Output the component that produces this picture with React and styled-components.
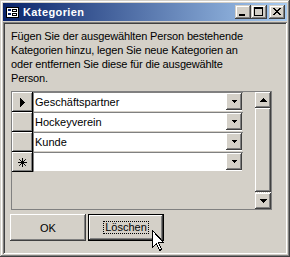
import React from 'react';
import styled, { createGlobalStyle, css } from 'styled-components';

const face = '#d4d0c8';
const uiFont = '"Liberation Sans", Arial, sans-serif';

const GlobalStyle = createGlobalStyle`
  html, body {
    margin: 0;
    padding: 0;
    background: #fff;
  }
  body {
    font-family: ${uiFont};
  }
`;

// classic 3D raised edge
const raised = css`
  background: ${face};
  box-shadow: inset -1px -1px #404040, inset 1px 1px #fff,
    inset -2px -2px #808080, inset 2px 2px ${face};
`;

const Window = styled.div`
  position: relative;
  box-sizing: border-box;
  width: 290px;
  height: 257px;
  padding: 3px;
  display: flex;
  flex-direction: column;
  background: ${face};
  box-shadow: inset -1px -1px #404040, inset 1px 1px ${face},
    inset -2px -2px #808080, inset 2px 2px #fff;
  overflow: hidden;
`;

const TitleBar = styled.div`
  flex: none;
  height: 18px;
  display: flex;
  align-items: center;
  padding: 0 2px;
  background: linear-gradient(to right, #0a246a, #a6caf0);
`;

const TitleText = styled.span`
  margin-left: 2px;
  color: #fff;
  font: bold 11px ${uiFont};
  letter-spacing: 0.4px;
  white-space: nowrap;
`;

const CaptionButtons = styled.div`
  margin-left: auto;
  display: flex;
`;

const CaptionButton = styled.div`
  width: 16px;
  height: 14px;
  margin-left: ${p => (p.$gap ? '2px' : '0')};
  background: ${face};
  box-shadow: inset -1px -1px #404040, inset 1px 1px ${face},
    inset -2px -2px #808080, inset 2px 2px #fff;

  svg {
    display: block;
  }
`;

const Client = styled.div`
  flex: 1;
  margin-top: 1px;
  padding: 7px 8px 0;
  box-shadow: inset 1px 1px #808080, inset -1px -1px #fff,
    inset 2px 2px #404040, inset -2px -2px ${face};
`;

const Description = styled.p`
  margin: 0;
  font: 11px/14px ${uiFont};
  letter-spacing: -0.15px;
  color: #000;
  white-space: nowrap;
`;

const Subform = styled.div`
  box-sizing: border-box;
  width: 261px;
  height: 119px;
  margin-top: 6px;
  border: 1px solid #808080;
  display: flex;
  justify-content: space-between;
`;

const Grid = styled.div`
  width: 231px;
  display: flex;
  flex-direction: column;
`;

const Row = styled.div`
  display: flex;
  height: 20px;
`;

const Selector = styled.div`
  width: 21px;
  height: 20px;
  display: flex;
  align-items: center;
  justify-content: center;
  background: ${face};
  box-shadow: inset -1px -1px #000, inset 1px 1px #fff, inset -2px -2px #808080;
`;

const Combo = styled.div`
  box-sizing: border-box;
  width: 210px;
  height: 20px;
  display: flex;
  padding-left: 2px;
  background: #fff;
  box-shadow: inset 1px 1px #808080, inset -1px -1px ${face};
`;

const ComboText = styled.span`
  flex: 1;
  align-self: center;
  font: 11px ${uiFont};
  color: #000;
  white-space: nowrap;
`;

const DropButton = styled.div`
  width: 16px;
  height: 17px;
  margin: 1px 1px 0 0;
  display: flex;
  align-items: center;
  justify-content: center;
  ${raised}
`;

const ScrollBar = styled.div`
  width: 16px;
  display: flex;
  flex-direction: column;
`;

const ScrollButton = styled.div`
  flex: none;
  height: 16px;
  display: flex;
  align-items: center;
  justify-content: center;
  ${raised}
`;

const Thumb = styled.div`
  flex: none;
  height: 84px;
  ${raised}
`;

const Track = styled.div`
  flex: 1;
  background: repeating-conic-gradient(#fff 0 25%, ${face} 0 50%) 0 0 / 2px 2px;
`;

const ButtonRow = styled.div`
  display: flex;
  gap: 2px;
  margin: 4px 0 0 -1px;
`;

const PushButton = styled.div`
  width: 76px;
  height: 27px;
  display: flex;
  align-items: center;
  justify-content: center;
  font: 11px ${uiFont};
  color: #000;
  background: ${face};
  box-shadow: ${p =>
    p.$default
      ? `inset 0 0 0 1px #000, inset -2px -2px #404040, inset 2px 2px #fff, inset -3px -3px #808080`
      : `inset -1px -1px #404040, inset 1px 1px #fff, inset -2px -2px #808080, inset 2px 2px ${face}`};
`;

const FocusRect = styled.span`
  padding: 0 1px;
  line-height: 11px;
  border: 1px dotted #000;
`;

const Cursor = styled.svg`
  position: absolute;
  left: 152px;
  top: 230px;
`;

const categories = ['Geschäftspartner', 'Hockeyverein', 'Kunde', ''];

const FormIcon = () => (
  <svg width="16" height="16" viewBox="0 0 16 16" shapeRendering="crispEdges">
    <rect x="1.5" y="3.5" width="12" height="10" fill="#fff" stroke="#000" />
    <rect x="3" y="5" width="3" height="2" fill="#0a246a" />
    <rect x="3" y="9" width="3" height="2" fill="#0a246a" />
    <rect x="7.5" y="5.5" width="4" height="2" fill="#fff" stroke="#000" />
    <rect x="7.5" y="9.5" width="4" height="2" fill="#fff" stroke="#000" />
  </svg>
);

const closePixels = [];
for (let i = 0; i < 7; i++) {
  closePixels.push([4 + i, 3 + i], [5 + i, 3 + i], [10 - i, 3 + i], [11 - i, 3 + i]);
}

const SmallDown = () => (
  <svg width="5" height="3" shapeRendering="crispEdges">
    <rect x="0" y="0" width="5" height="1" />
    <rect x="1" y="1" width="3" height="1" />
    <rect x="2" y="2" width="1" height="1" />
  </svg>
);

const ScrollArrow = ({ up }) => (
  <svg width="7" height="4" shapeRendering="crispEdges" style={up ? undefined : { transform: 'scaleY(-1)' }}>
    <rect x="3" y="0" width="1" height="1" />
    <rect x="2" y="1" width="3" height="1" />
    <rect x="1" y="2" width="5" height="1" />
    <rect x="0" y="3" width="7" height="1" />
  </svg>
);

const RecordMarker = ({ index }) => {
  if (index === 0) {
    return (
      <svg width="5" height="9" shapeRendering="crispEdges">
        <polygon points="0,0 5,4.5 0,9" fill="#000" />
      </svg>
    );
  }
  if (index === categories.length - 1) {
    return (
      <svg width="9" height="9" stroke="#000" strokeWidth="1">
        <path d="M4.5 0V9M0 4.5H9M1.2 1.2L7.8 7.8M7.8 1.2L1.2 7.8" />
      </svg>
    );
  }
  return null;
};

export default function App() {
  return (
    <>
      <GlobalStyle />
      <Window>
        <TitleBar>
          <FormIcon />
          <TitleText>Kategorien</TitleText>
          <CaptionButtons>
            <CaptionButton>
              <svg width="16" height="14" shapeRendering="crispEdges">
                <rect x="4" y="9" width="6" height="2" />
              </svg>
            </CaptionButton>
            <CaptionButton>
              <svg width="16" height="14" shapeRendering="crispEdges">
                <rect x="3.5" y="2.5" width="8" height="8" fill="none" stroke="#000" />
                <rect x="3" y="3" width="9" height="1" />
              </svg>
            </CaptionButton>
            <CaptionButton $gap>
              <svg width="16" height="14" shapeRendering="crispEdges">
                {closePixels.map(([x, y], i) => (
                  <rect key={i} x={x} y={y} width="1" height="1" />
                ))}
              </svg>
            </CaptionButton>
          </CaptionButtons>
        </TitleBar>

        <Client>
          <Description>
            Fügen Sie der ausgewählten Person bestehende
            <br />
            Kategorien hinzu, legen Sie neue Kategorien an
            <br />
            oder entfernen Sie diese für die ausgewählte
            <br />
            Person.
          </Description>

          <Subform>
            <Grid>
              {categories.map((name, i) => (
                <Row key={i}>
                  <Selector>
                    <RecordMarker index={i} />
                  </Selector>
                  <Combo>
                    <ComboText>{name}</ComboText>
                    <DropButton>
                      <SmallDown />
                    </DropButton>
                  </Combo>
                </Row>
              ))}
            </Grid>
            <ScrollBar>
              <ScrollButton>
                <ScrollArrow up />
              </ScrollButton>
              <Thumb />
              <Track />
              <ScrollButton>
                <ScrollArrow />
              </ScrollButton>
            </ScrollBar>
          </Subform>

          <ButtonRow>
            <PushButton>OK</PushButton>
            <PushButton $default>
              <FocusRect>Löschen</FocusRect>
            </PushButton>
          </ButtonRow>
        </Client>

        <Cursor width="12" height="21" viewBox="0 0 12 21" shapeRendering="crispEdges">
          <path
            d="M0.5 0.5V17.5L4.5 13.5L7.5 20.5L9.5 19.5L6.5 12.5H11.5Z"
            fill="#fff"
            stroke="#000"
            strokeLinejoin="miter"
          />
        </Cursor>
      </Window>
    </>
  );
}
